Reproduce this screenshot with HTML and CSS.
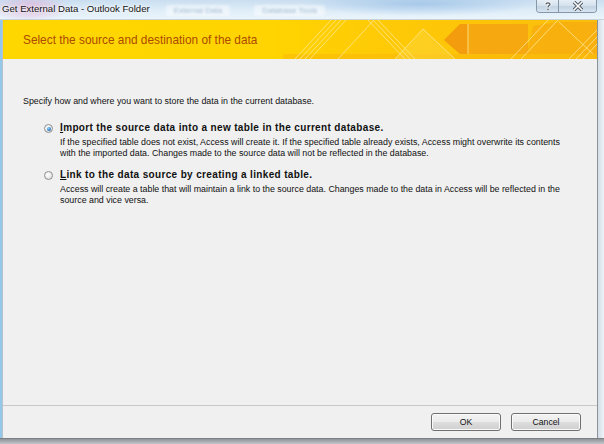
FILE: index.html
```html
<!DOCTYPE html>
<html>
<head>
<meta charset="utf-8">
<title>Get External Data - Outlook Folder</title>
<link rel="stylesheet" href="styles.css">
</head>
<body>
<div class="window">
  <div class="titlebar">
    <span class="title">Get External Data - Outlook Folder</span>
    <div class="ghosts">
      <span class="ghost">External Data</span>
      <span class="ghost">Database Tools</span>
    </div>
    <div class="caption">
      <span class="cbtn help">
        <svg width="10" height="10" viewBox="0 0 10 10"><path d="M3 3.2 C3 1.6 7 1.4 7 3.2 C7 4.6 5 4.6 5 6.2" fill="none" stroke="#fff" stroke-width="3"/><path d="M3 3.2 C3 1.6 7 1.4 7 3.2 C7 4.6 5 4.6 5 6.2" fill="none" stroke="#4a5560" stroke-width="1.3"/><circle cx="5" cy="8.4" r="1.1" fill="#4a5560" stroke="#fff" stroke-width="0.6"/></svg>
      </span>
      <span class="cbtn close">
        <svg width="12" height="10" viewBox="0 0 12 10"><path d="M2 1 L10 9 M10 1 L2 9" stroke="#4a5560" stroke-width="3.4"/><path d="M2 1 L10 9 M10 1 L2 9" stroke="#fff" stroke-width="1.6"/></svg>
      </span>
    </div>
  </div>
  <div class="frame">
    <div class="lframe"></div>
    <div class="client">
      <div class="banner">
        <svg class="banner-art" width="594" height="39" viewBox="0 0 594 39" preserveAspectRatio="none">
          <defs>
            <linearGradient id="bg" x1="0" x2="1" y1="0" y2="0">
              <stop offset="0" stop-color="#ffd700"/>
              <stop offset="0.45" stop-color="#ffd400"/>
              <stop offset="0.62" stop-color="#fecb06"/>
              <stop offset="1" stop-color="#fbbd0c"/>
            </linearGradient>
          </defs>
          <rect width="594" height="39" fill="url(#bg)"/>
          <rect x="280" y="34" width="314" height="5" fill="#f9b40c" opacity="0.45"/>
          <path d="M420 9 L392 39 L452 39 Z" fill="#fdd640" opacity="0.45"/>
          <path d="M441 20 L457 4 L525 4 L525 34 L457 34 Z" fill="#f5a312" opacity="0.85"/>
          <path d="M441 20 L457 4 L465 4 L465 34 L457 34 Z" fill="#f29a0e" opacity="0.8"/>
          <path d="M530 6 L556 2 L594 2 L594 34 L524 34 Z" fill="#f6a911" opacity="0.7"/>
          <g fill="none" stroke="#ffe68a" stroke-width="1" opacity="0.85">
            <path d="M292 39 L328 0 M297 39 L333 0 M302 39 L338 0 M307 39 L343 0"/>
            <path d="M335 39 L371 0"/>
            <path d="M365 0 L402 39 M370 0 L407 39 M375 0 L412 39"/>
            <path d="M392 39 L420 9 L452 39"/>
            <path d="M465 4 L465 34"/>
            <path d="M508 39 L545 0 M518 39 L555 0"/>
            <path d="M556 2 L590 34"/>
            <path d="M566 39 L594 10 M573 39 L594 17 M580 39 L594 24"/>
          </g>
        </svg>
        <h1 class="banner-title">Select the source and destination of the data</h1>
      </div>
      <div class="content">
        <p class="intro">Specify how and where you want to store the data in the current database.</p>
        <div class="option">
          <span class="radio checked"></span>
          <div class="option-text">
            <div class="label"><u>I</u>mport the source data into a new table in the current database.</div>
            <p class="desc">If the specified table does not exist, Access will create it. If the specified table already exists, Access might overwrite its contents<br>with the imported data. Changes made to the source data will not be reflected in the database.</p>
          </div>
        </div>
        <div class="option">
          <span class="radio"></span>
          <div class="option-text">
            <div class="label"><u>L</u>ink to the data source by creating a linked table.</div>
            <p class="desc">Access will create a table that will maintain a link to the source data. Changes made to the data in Access will be reflected in the<br>source and vice versa.</p>
          </div>
        </div>
      </div>
      <div class="footer">
        <button class="btn">OK</button>
        <button class="btn">Cancel</button>
      </div>
    </div>
    <div class="rframe"></div>
  </div>
  <div class="bframe"></div>
</div>
</body>
</html>
```
FILE: styles.css
```css
* { box-sizing: border-box; }
html, body { margin: 0; padding: 0; }
body {
  width: 604px;
  height: 444px;
  overflow: hidden;
  background: #ffffff;
  font-family: "Liberation Sans", Arial, sans-serif;
}
.window {
  width: 604px;
  height: 444px;
  display: flex;
  flex-direction: column;
}
.titlebar {
  height: 20px;
  flex: none;
  display: flex;
  align-items: flex-start;
  position: relative;
  background:
    radial-gradient(ellipse 40px 14px at 30px 8px, rgba(230,150,200,0.55), rgba(230,150,200,0) 100%),
    radial-gradient(ellipse 120px 12px at 420px 4px, rgba(150,190,230,0.7), rgba(150,190,230,0) 100%),
    linear-gradient(180deg, #c9def0 0%, #dfedf8 55%, #eaf4fb 100%);
  border-bottom: 1px solid #c8d2da;
}
.title {
  font-size: 9.6px;
  color: #111;
  padding: 3px 0 0 2px;
  text-shadow: 0 0 4px #fff, 0 0 2px #fff;
  white-space: nowrap;
}
.ghosts {
  display: flex;
  gap: 24px;
  padding: 5px 0 0 16px;
  filter: blur(1.2px);
  opacity: 0.55;
}
.ghost {
  font-size: 8px;
  color: #6f8fb0;
  background: rgba(255,255,255,0.8);
  padding: 1px 8px;
  border-radius: 3px;
}
.caption {
  margin-left: auto;
  margin-right: 7px;
  display: flex;
  border: 1px solid #8597a8;
  border-top: none;
  border-radius: 0 0 4px 4px;
  overflow: hidden;
  height: 13px;
}
.cbtn {
  height: 12px;
  display: flex;
  align-items: center;
  justify-content: center;
  background: linear-gradient(180deg, #e6eef6 0%, #d3e0ec 50%, #c3d3e2 51%, #d6e4f0 100%);
}
.help { width: 22px; border-right: 1px solid #8597a8; }
.close { width: 37px; }
.frame {
  flex: 1;
  display: flex;
  min-height: 0;
}
.lframe {
  width: 3px;
  background: #93c8ea;
  border-right: 1px solid #b7c3cc;
}
.rframe {
  width: 7px;
  border-left: 1px solid #8d9398;
  background: linear-gradient(90deg, #d3dde6, #eef4f9);
}
.client {
  flex: 1;
  display: flex;
  flex-direction: column;
  background: #f0f0f0;
}
.banner {
  height: 39px;
  flex: none;
  position: relative;
  display: flex;
  align-items: center;
  overflow: hidden;
}
.banner-art {
  position: absolute;
  left: 0;
  top: 0;
}
.banner-title {
  position: relative;
  margin: 0;
  padding: 1px 0 0 20px;
  font-weight: normal;
  font-size: 11.85px;
  color: #ad4a00;
  white-space: nowrap;
}
.content {
  flex: 1;
  padding: 37px 0 0 20px;
  font-size: 8.85px;
  color: #111;
}
.intro {
  margin: 0 0 14px 0;
  line-height: 11px;
}
.option {
  display: flex;
  align-items: flex-start;
  gap: 7px;
  padding-left: 21px;
  margin-bottom: 9px;
}
.radio {
  flex: none;
  width: 9px;
  height: 9px;
  margin-top: 3px;
  border-radius: 50%;
  border: 1px solid #8e8f8f;
  background: radial-gradient(circle at 40% 35%, #ffffff 0%, #e8e8e8 60%, #cfcfcf 100%);
  position: relative;
}
.radio.checked::after {
  content: "";
  position: absolute;
  left: 1.5px;
  top: 1.5px;
  width: 4px;
  height: 4px;
  border-radius: 50%;
  background: radial-gradient(circle at 40% 35%, #8fd0ff 0%, #1e6fc0 70%, #16508c 100%);
}
.label {
  font-weight: bold;
  font-size: 10px;
  letter-spacing: 0.35px;
  line-height: 13px;
  color: #111;
}
.desc {
  margin: 3px 0 0 0;
  line-height: 11px;
}
.footer {
  flex: none;
  height: 33px;
  border-top: 1px solid #c8c8c8;
  display: flex;
  justify-content: flex-end;
  gap: 10px;
  padding: 7px 16px 0 0;
}
.btn {
  width: 70px;
  height: 18px;
  padding: 0;
  font-family: "Liberation Sans", Arial, sans-serif;
  font-size: 8.7px;
  color: #111;
  border: 1px solid #707070;
  border-radius: 3px;
  background: linear-gradient(180deg, #f4f4f4 0%, #ebebeb 48%, #dddddd 52%, #cfcfcf 100%);
  box-shadow: inset 0 0 0 1px #fafafa;
}
.bframe {
  height: 6px;
  flex: none;
  border-top: 1px solid #7d8185;
  background: linear-gradient(180deg, #8f9296 0%, #c4c7ca 100%);
}
```
